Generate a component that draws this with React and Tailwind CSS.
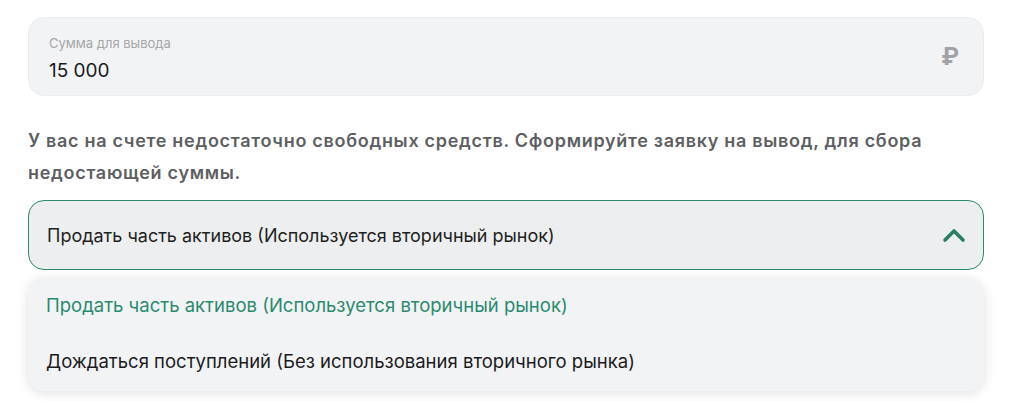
const options = [
  "Продать часть активов (Используется вторичный рынок)",
  "Дождаться поступлений (Без использования вторичного рынка)",
];

const App = () => {
  const selected = 0;

  return (
    <div className="w-full min-h-[401px] bg-white pl-7 pr-10 pt-[17px] font-['Inter',sans-serif]">
      {/* AMOUNT FIELD */}
      <div className="flex items-center justify-between h-[79px] rounded-2xl border border-[#ebecee] bg-[#f2f3f5] pl-5 pr-6">
        <div className="flex flex-col pt-1">
          <span className="text-[13px] text-[#a4a6aa] leading-4">Сумма для вывода</span>
          <span className="mt-2 text-[19px] text-[#1b1b1d] leading-6">15 000</span>
        </div>
        <span className="text-2xl font-bold text-[#a0a2a6]">₽</span>
      </div>

      {/* WARNING */}
      <p className="mt-[29px] text-[18px] leading-8 font-semibold tracking-[0.7px] text-[#5e5f62]">
        У вас на счете недостаточно свободных средств. Сформируйте заявку на
        вывод, для сбора недостающей суммы.
      </p>

      {/* SELECT */}
      <div className="mt-[11px]">
        <button className="flex w-full h-[70px] items-center justify-between rounded-2xl border-[1.5px] border-[#2a8a6c] bg-[#eceef0] pl-[18px] pr-[17px] text-left">
          <span className="text-[18px] text-[#1f1f21]">{options[selected]}</span>
          <svg width="24" height="16" viewBox="0 0 24 16" className="text-[#2b7c64]">
            <polyline
              points="3,13 12,4 21,13"
              fill="none"
              stroke="currentColor"
              strokeWidth="3.6"
              strokeLinecap="round"
              strokeLinejoin="round"
            />
          </svg>
        </button>

        <div className="mt-2 rounded-2xl bg-[#f2f3f5] shadow-[0_2px_12px_rgba(0,0,0,0.13)] pb-px">
          {options.map((opt, i) => (
            <div
              key={opt}
              className={`flex h-[56px] items-center px-[18px] text-[18.5px] ${
                i === selected ? "text-[#2b8a6e]" : "text-[#1b1b1d]"
              }`}
            >
              {opt}
            </div>
          ))}
        </div>
      </div>
    </div>
  );
};

export default App;
